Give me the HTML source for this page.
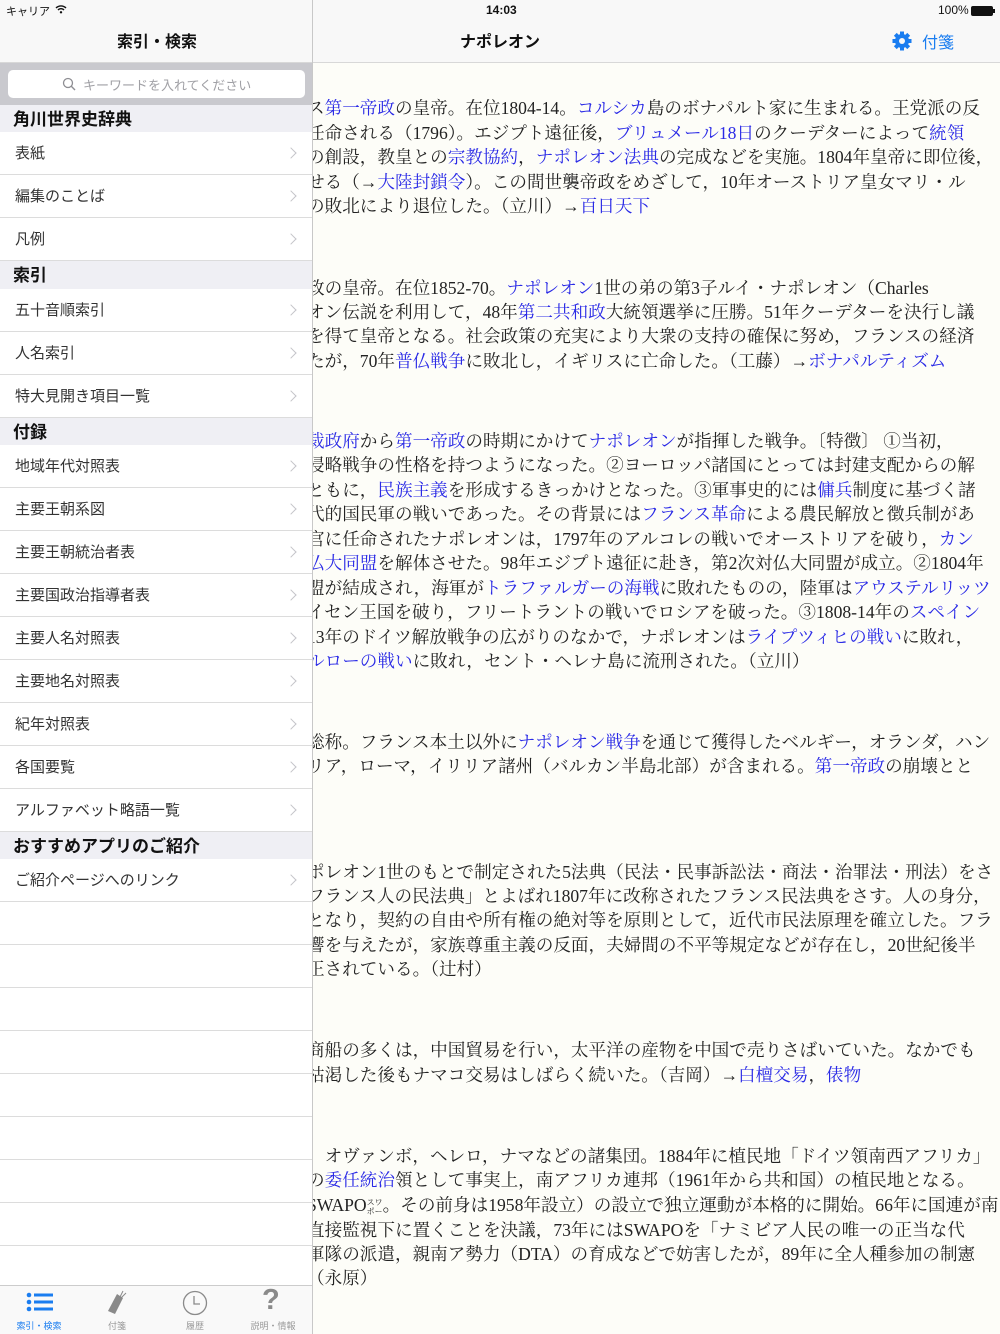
<!DOCTYPE html>
<html><head><meta charset="utf-8"><style>
*{margin:0;padding:0;box-sizing:border-box}
body{width:1000px;height:1334px;position:relative;overflow:hidden;background:#fdfdf8;font-family:"Liberation Sans","Noto Sans CJK JP",sans-serif}
.abs{position:absolute}
#content{position:absolute;left:0;top:66px;width:1000px;height:1268px;overflow:hidden}
.l{position:absolute;left:307px;white-space:nowrap;font-family:"Liberation Serif","Noto Serif CJK SC",serif;font-size:17.6px;color:#222;line-height:24px}
.l a{color:#2a2ae6;text-decoration:none}
#side{position:absolute;left:0;top:0;width:313px;height:1334px;background:#fff;border-right:1px solid #c8c8c8;z-index:5}
.hd{position:absolute;left:0;width:312px;background:#efeff4;font-weight:bold;font-size:17px;color:#111;padding-left:13px}
.row{position:absolute;left:0;width:312px;height:43px;border-bottom:1px solid #dcdcdc;font-size:15px;color:#333;padding-left:15px;line-height:44px;background:#fff}
.row.c::after{content:"";position:absolute;right:17px;top:17px;width:7px;height:7px;border-right:1.5px solid #c4c4c9;border-top:1.5px solid #c4c4c9;transform:rotate(45deg)}
.tab{position:absolute;top:1319px;font-size:9px;color:#999;text-align:center;width:78px}
</style></head><body>
<div class="abs" style="left:313px;top:0;width:687px;height:63px;background:#f8f8f8;border-bottom:1px solid #d8d8d8;z-index:4"></div>
<div class="abs" style="left:486px;top:3px;font-size:12px;font-weight:bold;color:#111;z-index:6">14:03</div>
<div class="abs" style="left:938px;top:3px;font-size:12px;color:#111;z-index:6">100%</div>
<div class="abs" style="left:971px;top:6px;width:22px;height:10px;background:#111;border-radius:2px;z-index:6"></div>
<div class="abs" style="left:993px;top:9px;width:2px;height:4px;background:#111;z-index:6"></div>
<div class="abs" style="left:460px;top:28px;font-size:16px;font-weight:bold;color:#111;z-index:6">ナポレオン</div>
<svg class="abs" style="left:892px;top:31px;z-index:6" width="20" height="20" viewBox="0 0 20 20"><g fill="#1a7df0"><circle cx="10" cy="10" r="7"/><g stroke="#1a7df0" stroke-width="4"><line x1="10" y1="0.5" x2="10" y2="19.5"/><line x1="0.5" y1="10" x2="19.5" y2="10"/><line x1="3.3" y1="3.3" x2="16.7" y2="16.7"/><line x1="16.7" y1="3.3" x2="3.3" y2="16.7"/></g></g><circle cx="10" cy="10" r="3" fill="#f8f8f8"/></svg>
<div class="abs" style="left:922px;top:29px;font-size:16px;color:#1a7df0;z-index:6">付箋</div>

<div id="content">
<div class="l" style="top:30px">ス<a>第一帝政</a>の皇帝。在位1804-14。<a>コルシカ</a>島のボナパルト家に生まれる。王党派の反</div>
<div class="l" style="top:55px">任命される（1796）。エジプト遠征後，<a>ブリュメール18日</a>のクーデターによって<a>統領</a></div>
<div class="l" style="top:79px">の創設，教皇との<a>宗教協約</a>，<a>ナポレオン法典</a>の完成などを実施。1804年皇帝に即位後，</div>
<div class="l" style="top:104px">せる（→<a>大陸封鎖令</a>）。この間世襲帝政をめざして，10年オーストリア皇女マリ・ル</div>
<div class="l" style="top:128px">の敗北により退位した。（立川）→<a>百日天下</a></div>

<div class="l" style="top:210px">政の皇帝。在位1852-70。<a>ナポレオン</a>1世の弟の第3子ルイ・ナポレオン（Charles</div>
<div class="l" style="top:234px">オン伝説を利用して，48年<a>第二共和政</a>大統領選挙に圧勝。51年クーデターを決行し議</div>
<div class="l" style="top:258px">を得て皇帝となる。社会政策の充実により大衆の支持の確保に努め，フランスの経済</div>
<div class="l" style="top:283px">たが，70年<a>普仏戦争</a>に敗北し，イギリスに亡命した。（工藤）→<a>ボナパルティズム</a></div>

<div class="l" style="top:363px"><a>裁政府</a>から<a>第一帝政</a>の時期にかけて<a>ナポレオン</a>が指揮した戦争。〔特徴〕 ①当初，</div>
<div class="l" style="top:387px">侵略戦争の性格を持つようになった。②ヨーロッパ諸国にとっては封建支配からの解</div>
<div class="l" style="top:412px">ともに，<a>民族主義</a>を形成するきっかけとなった。③軍事史的には<a>傭兵</a>制度に基づく諸</div>
<div class="l" style="top:436px">代的国民軍の戦いであった。その背景には<a>フランス革命</a>による農民解放と徴兵制があ</div>
<div class="l" style="top:461px">官に任命されたナポレオンは，1797年のアルコレの戦いでオーストリアを破り，<a>カン</a></div>
<div class="l" style="top:485px"><a>仏大同盟</a>を解体させた。98年エジプト遠征に赴き，第2次対仏大同盟が成立。②1804年</div>
<div class="l" style="top:510px">盟が結成され，海軍が<a>トラファルガーの海戦</a>に敗れたものの，陸軍は<a>アウステルリッツ</a></div>
<div class="l" style="top:534px">イセン王国を破り，フリートラントの戦いでロシアを破った。③1808-14年の<a>スペイン</a></div>
<div class="l" style="top:559px">13年のドイツ解放戦争の広がりのなかで，ナポレオンは<a>ライプツィヒの戦い</a>に敗れ，</div>
<div class="l" style="top:583px"><a>ルローの戦い</a>に敗れ，セント・ヘレナ島に流刑された。（立川）</div>

<div class="l" style="top:664px">総称。フランス本土以外に<a>ナポレオン戦争</a>を通じて獲得したベルギー，オランダ，ハン</div>
<div class="l" style="top:688px">リア，ローマ，イリリア諸州（バルカン半島北部）が含まれる。<a>第一帝政</a>の崩壊とと</div>

<div class="l" style="top:794px">ポレオン1世のもとで制定された5法典（民法・民事訴訟法・商法・治罪法・刑法）をさ</div>
<div class="l" style="top:818px">フランス人の民法典」とよばれ1807年に改称されたフランス民法典をさす。人の身分，</div>
<div class="l" style="top:842px">となり，契約の自由や所有権の絶対等を原則として，近代市民法原理を確立した。フラ</div>
<div class="l" style="top:867px">響を与えたが，家族尊重主義の反面，夫婦間の不平等規定などが存在し，20世紀後半</div>
<div class="l" style="top:891px">正されている。（辻村）</div>

<div class="l" style="top:972px">商船の多くは，中国貿易を行い，太平洋の産物を中国で売りさばいていた。なかでも</div>
<div class="l" style="top:997px">枯渇した後もナマコ交易はしばらく続いた。（吉岡）→<a>白檀交易</a>，<a>俵物</a></div>

<div class="l" style="top:1078px">，オヴァンボ，ヘレロ，ナマなどの諸集団。1884年に植民地「ドイツ領南西アフリカ」</div>
<div class="l" style="top:1102px">の<a>委任統治</a>領として事実上，南アフリカ連邦（1961年から共和国）の植民地となる。</div>
<div class="l" style="top:1127px">SWAPO<span style="font-size:8px;display:inline-block;line-height:9px;vertical-align:middle">スワ<br>ポー</span>。その前身は1958年設立）の設立で独立運動が本格的に開始。66年に国連が南</div>
<div class="l" style="top:1152px">直接監視下に置くことを決議，73年にはSWAPOを「ナミビア人民の唯一の正当な代</div>
<div class="l" style="top:1176px">軍隊の派遣，親南ア勢力（DTA）の育成などで妨害したが，89年に全人種参加の制憲</div>
<div class="l" style="top:1200px">（永原）</div>
</div>

<div id="side">
<div class="abs" style="left:0;top:0;width:312px;height:63px;background:#f8f8f8;border-bottom:1px solid #d8d8d8"></div>
<div class="abs" style="left:6px;top:3px;font-size:11px;color:#111">キャリア</div>
<svg class="abs" style="left:55px;top:4px" width="12" height="10" viewBox="0 0 12 10"><path d="M1 4a7 7 0 0 1 10 0M3 6a4 4 0 0 1 6 0" stroke="#111" stroke-width="1.4" fill="none"/><circle cx="6" cy="8.3" r="1.2" fill="#111"/></svg>
<div class="abs" style="left:117px;top:28px;font-size:16px;font-weight:bold;color:#111">索引・検索</div>
<div class="abs" style="left:0;top:63px;width:312px;height:42px;background:#c9c9ce"></div>
<div class="abs" style="left:8px;top:70px;width:297px;height:28px;background:#fff;border-radius:5px"></div>
<svg class="abs" style="left:62px;top:77px" width="14" height="14" viewBox="0 0 14 14"><circle cx="6" cy="6" r="4.5" stroke="#8e8e93" stroke-width="1.3" fill="none"/><line x1="9.3" y1="9.3" x2="13" y2="13" stroke="#8e8e93" stroke-width="1.4"/></svg>
<div class="abs" style="left:83px;top:75px;font-size:13px;color:#a0a0a5">キーワードを入れてください</div>

<div class="hd" style="top:105px;height:27px;line-height:29px">角川世界史辞典</div>
<div class="row c" style="top:132px">表紙</div>
<div class="row c" style="top:175px">編集のことば</div>
<div class="row c" style="top:218px">凡例</div>
<div class="hd" style="top:261px;height:28px;line-height:29px">索引</div>
<div class="row c" style="top:289px">五十音順索引</div>
<div class="row c" style="top:332px">人名索引</div>
<div class="row c" style="top:375px">特大見開き項目一覧</div>
<div class="hd" style="top:418px;height:27px;line-height:29px">付録</div>
<div class="row c" style="top:445px">地域年代対照表</div>
<div class="row c" style="top:488px">主要王朝系図</div>
<div class="row c" style="top:531px">主要王朝統治者表</div>
<div class="row c" style="top:574px">主要国政治指導者表</div>
<div class="row c" style="top:617px">主要人名対照表</div>
<div class="row c" style="top:660px">主要地名対照表</div>
<div class="row c" style="top:703px">紀年対照表</div>
<div class="row c" style="top:746px">各国要覧</div>
<div class="row c" style="top:789px">アルファベット略語一覧</div>
<div class="hd" style="top:832px;height:27px;line-height:29px">おすすめアプリのご紹介</div>
<div class="row c" style="top:859px">ご紹介ページへのリンク</div>
<div class="row" style="top:902px"></div>
<div class="row" style="top:945px"></div>
<div class="row" style="top:988px"></div>
<div class="row" style="top:1031px"></div>
<div class="row" style="top:1074px"></div>
<div class="row" style="top:1117px"></div>
<div class="row" style="top:1160px"></div>
<div class="row" style="top:1203px"></div>
<div class="row" style="top:1246px;border-bottom:none"></div>

<div class="abs" style="left:0;top:1285px;width:312px;height:49px;background:#f9f9f9;border-top:1px solid #ccc"></div>
<svg class="abs" style="left:26px;top:1292px" width="28" height="20" viewBox="0 0 28 20"><g fill="#1a7df0"><circle cx="3" cy="3" r="2.3"/><circle cx="3" cy="10" r="2.3"/><circle cx="3" cy="17" r="2.3"/><rect x="8" y="1.5" width="19" height="3"/><rect x="8" y="8.5" width="19" height="3"/><rect x="8" y="15.5" width="19" height="3"/></g></svg>
<div class="tab" style="left:0;color:#1a7df0">索引・検索</div>
<svg class="abs" style="left:106px;top:1290px" width="22" height="26" viewBox="0 0 22 26"><path d="M11 4 L17 8 L9 24 L2 21 Z" fill="#8a8a8a"/><path d="M14 7 L17 1 M15 8 L20 3" stroke="#8a8a8a" stroke-width="1"/></svg>
<div class="tab" style="left:78px">付箋</div>
<svg class="abs" style="left:182px;top:1290px" width="26" height="26" viewBox="0 0 26 26"><circle cx="13" cy="13" r="11.5" stroke="#8a8a8a" stroke-width="1.3" fill="none"/><path d="M12 6 V14 H18" stroke="#8a8a8a" stroke-width="1.3" fill="none"/></svg>
<div class="tab" style="left:156px">履歴</div>
<div class="abs" style="left:262px;top:1284px;font-size:29px;font-weight:bold;color:#8a8a8a">?</div>
<div class="tab" style="left:234px">説明・情報</div>
</div>
</body></html>
